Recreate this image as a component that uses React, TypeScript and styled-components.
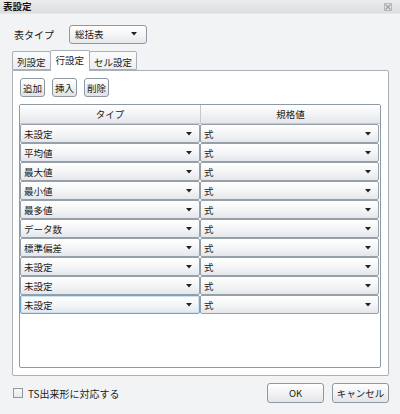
import React, { useState } from "react";
import styled, { createGlobalStyle } from "styled-components";

const typeRows = [
  "未設定",
  "平均値",
  "最大値",
  "最小値",
  "最多値",
  "データ数",
  "標準偏差",
  "未設定",
  "未設定",
  "未設定",
];

const tabs = ["列設定", "行設定", "セル設定"];

const GlobalStyle = createGlobalStyle`
  body {
    margin: 0;
    font-family: "Noto Sans CJK JP", "Noto Sans", "Liberation Sans", sans-serif;
    font-size: 10px;
    color: #1a1a1a;
  }
`;

const Arrow = () => (
  <svg width="6" height="4" viewBox="0 0 6 4">
    <path d="M0 0 H6 L3 3.5 Z" fill="#222" />
  </svg>
);

export default function App() {
  const [activeTab, setActiveTab] = useState(1);
  const [checked, setChecked] = useState(false);

  return (
    <>
      <GlobalStyle />
      <Window>
        <TitleBar>
          <Title>表設定</Title>
          <svg width="8" height="8" viewBox="0 0 8 8">
            <rect x="0.5" y="0.5" width="7" height="7" fill="none" stroke="#b5b9bf" />
            <path d="M1.5 1.5 L6.5 6.5 M6.5 1.5 L1.5 6.5" stroke="#9aa0a8" strokeWidth="1.2" />
          </svg>
        </TitleBar>
        <Body>
          <TypeRow>
            <TypeLabel>表タイプ</TypeLabel>
            <TypeSelect>
              <span>総括表</span>
              <Arrow />
            </TypeSelect>
          </TypeRow>
          <TabBar>
            {tabs.map((t, i) => (
              <Tab key={t} $active={i === activeTab} onClick={() => setActiveTab(i)}>
                {t}
              </Tab>
            ))}
          </TabBar>
          <Panel>
            <ButtonRow>
              <SmallButton>追加</SmallButton>
              <SmallButton>挿入</SmallButton>
              <SmallButton>削除</SmallButton>
            </ButtonRow>
            <Table>
              <HeaderRow>
                <HeaderCell>タイプ</HeaderCell>
                <HeaderCell>規格値</HeaderCell>
              </HeaderRow>
              {typeRows.map((r, i) => (
                <Row key={i}>
                  <CellSelect $focus={i === typeRows.length - 1}>
                    <span>{r}</span>
                    <Arrow />
                  </CellSelect>
                  <CellSelect>
                    <span>式</span>
                    <Arrow />
                  </CellSelect>
                </Row>
              ))}
            </Table>
          </Panel>
          <Footer>
            <CheckLabel onClick={() => setChecked(!checked)}>
              <CheckBox>{checked ? "✓" : ""}</CheckBox>
              TS出来形に対応する
            </CheckLabel>
            <FooterButtons>
              <DialogButton>OK</DialogButton>
              <DialogButton>キャンセル</DialogButton>
            </FooterButtons>
          </Footer>
        </Body>
      </Window>
    </>
  );
}

const Window = styled.div`
  width: 400px;
  height: 414px;
  background: #f2f3f4;
  display: flex;
  flex-direction: column;
  overflow: hidden;
`;

const TitleBar = styled.div`
  height: 13px;
  display: flex;
  align-items: center;
  justify-content: space-between;
  padding: 0 8px 0 3px;
  background: linear-gradient(#ececed, #dcdee0);
  border-bottom: 1px solid #e4e6e8;
`;

const Title = styled.div`
  font-weight: bold;
  font-size: 9.5px;
  line-height: 13px;
  color: #111;
`;

const Body = styled.div`
  flex: 1;
  display: flex;
  flex-direction: column;
  padding: 11px 11px 0 12px;
`;

const TypeRow = styled.div`
  display: flex;
  align-items: center;
  height: 18px;
  padding-left: 2px;
`;

const TypeLabel = styled.div`
  width: 55px;
  font-size: 10px;
`;

const selectBase = `
  display: flex;
  align-items: center;
  justify-content: space-between;
  box-sizing: border-box;
  background: linear-gradient(#ffffff, #f3f4f6 55%, #e4e7ea);
  font-size: 9.5px;
  cursor: default;
`;

const TypeSelect = styled.div`
  ${selectBase}
  width: 78px;
  height: 19px;
  border: 1px solid #8e98a3;
  border-radius: 3px;
  padding: 0 9px 0 5px;
`;

const TabBar = styled.div`
  display: flex;
  align-items: flex-end;
  margin-top: 7px;
  height: 20px;
`;

const Tab = styled.div<{ $active?: boolean }>`
  box-sizing: border-box;
  height: ${(p) => (p.$active ? "21px" : "19px")};
  padding: ${(p) => (p.$active ? "2px 5px 0 5px" : "3px 4px 0 4px")};
  margin-bottom: ${(p) => (p.$active ? "-1px" : "0")};
  background: ${(p) => (p.$active ? "#ffffff" : "linear-gradient(#fbfbfc, #eceef0)")};
  border: 1px solid #a9b0b9;
  border-bottom: ${(p) => (p.$active ? "none" : "1px solid #a9b0b9")};
  border-radius: 2px 2px 0 0;
  margin-left: -1px;
  font-size: 9.5px;
  white-space: nowrap;
  position: relative;
  z-index: ${(p) => (p.$active ? 1 : 0)};
  &:first-child {
    margin-left: 0;
  }
`;

const Panel = styled.div`
  box-sizing: border-box;
  width: 377px;
  height: 306px;
  background: #ffffff;
  border: 1px solid #a9b0b9;
  border-radius: 0 2px 2px 2px;
  padding: 7px 7px 7px 6px;
  display: flex;
  flex-direction: column;
`;

const ButtonRow = styled.div`
  display: flex;
  gap: 7px;
  padding-left: 1px;
  margin-bottom: 7px;
`;

const SmallButton = styled.button`
  box-sizing: border-box;
  height: 19px;
  width: 25px;
  padding: 0;
  font-family: inherit;
  font-size: 9.5px;
  color: #1a1a1a;
  background: linear-gradient(#ffffff, #eef0f2 55%, #dfe2e6);
  border: 1px solid #8e98a3;
  border-radius: 3px;
  white-space: nowrap;
`;

const Table = styled.div`
  box-sizing: border-box;
  flex: 1;
  border: 1px solid #8f99a4;
  border-radius: 2px;
  background: #ffffff;
`;

const HeaderRow = styled.div`
  display: grid;
  grid-template-columns: 180px 1fr;
  height: 19px;
`;

const HeaderCell = styled.div`
  display: flex;
  align-items: center;
  justify-content: center;
  background: linear-gradient(#ffffff, #f2f3f5 50%, #e4e6e9);
  border-bottom: 1px solid #c4c9cf;
  font-size: 9.5px;
  & + & {
    border-left: 1px solid #c4c9cf;
  }
`;

const Row = styled.div`
  display: grid;
  grid-template-columns: 180px 1fr;
  height: 19px;
`;

const CellSelect = styled.div<{ $focus?: boolean }>`
  ${selectBase}
  height: 19px;
  padding: 0 7px 0 3px;
  border: 1px solid ${(p) => (p.$focus ? "#6fa6c9" : "#96a0ab")};
  box-shadow: ${(p) => (p.$focus ? "inset 0 0 0 1px #c7e2f3" : "none")};
  border-radius: 2px;
  &:last-child {
    margin-right: 1px;
  }
`;

const Footer = styled.div`
  display: flex;
  align-items: center;
  justify-content: space-between;
  padding: 7px 0 0 1px;
`;

const CheckLabel = styled.label`
  display: flex;
  align-items: center;
  gap: 5px;
  font-size: 10px;
  cursor: default;
`;

const CheckBox = styled.span`
  box-sizing: border-box;
  width: 10px;
  height: 10px;
  border: 1px solid #8e98a3;
  background: linear-gradient(#f7f8f9, #e6e9ec);
  font-size: 8px;
  line-height: 8px;
  text-align: center;
`;

const FooterButtons = styled.div`
  display: flex;
  gap: 8px;
`;

const DialogButton = styled.button`
  box-sizing: border-box;
  width: 57px;
  height: 20px;
  padding: 0;
  font-family: inherit;
  font-size: 9.5px;
  color: #1a1a1a;
  white-space: nowrap;
  background: linear-gradient(#ffffff, #f0f1f3 55%, #e2e5e8);
  border: 1px solid #8e98a3;
  border-radius: 3px;
`;
